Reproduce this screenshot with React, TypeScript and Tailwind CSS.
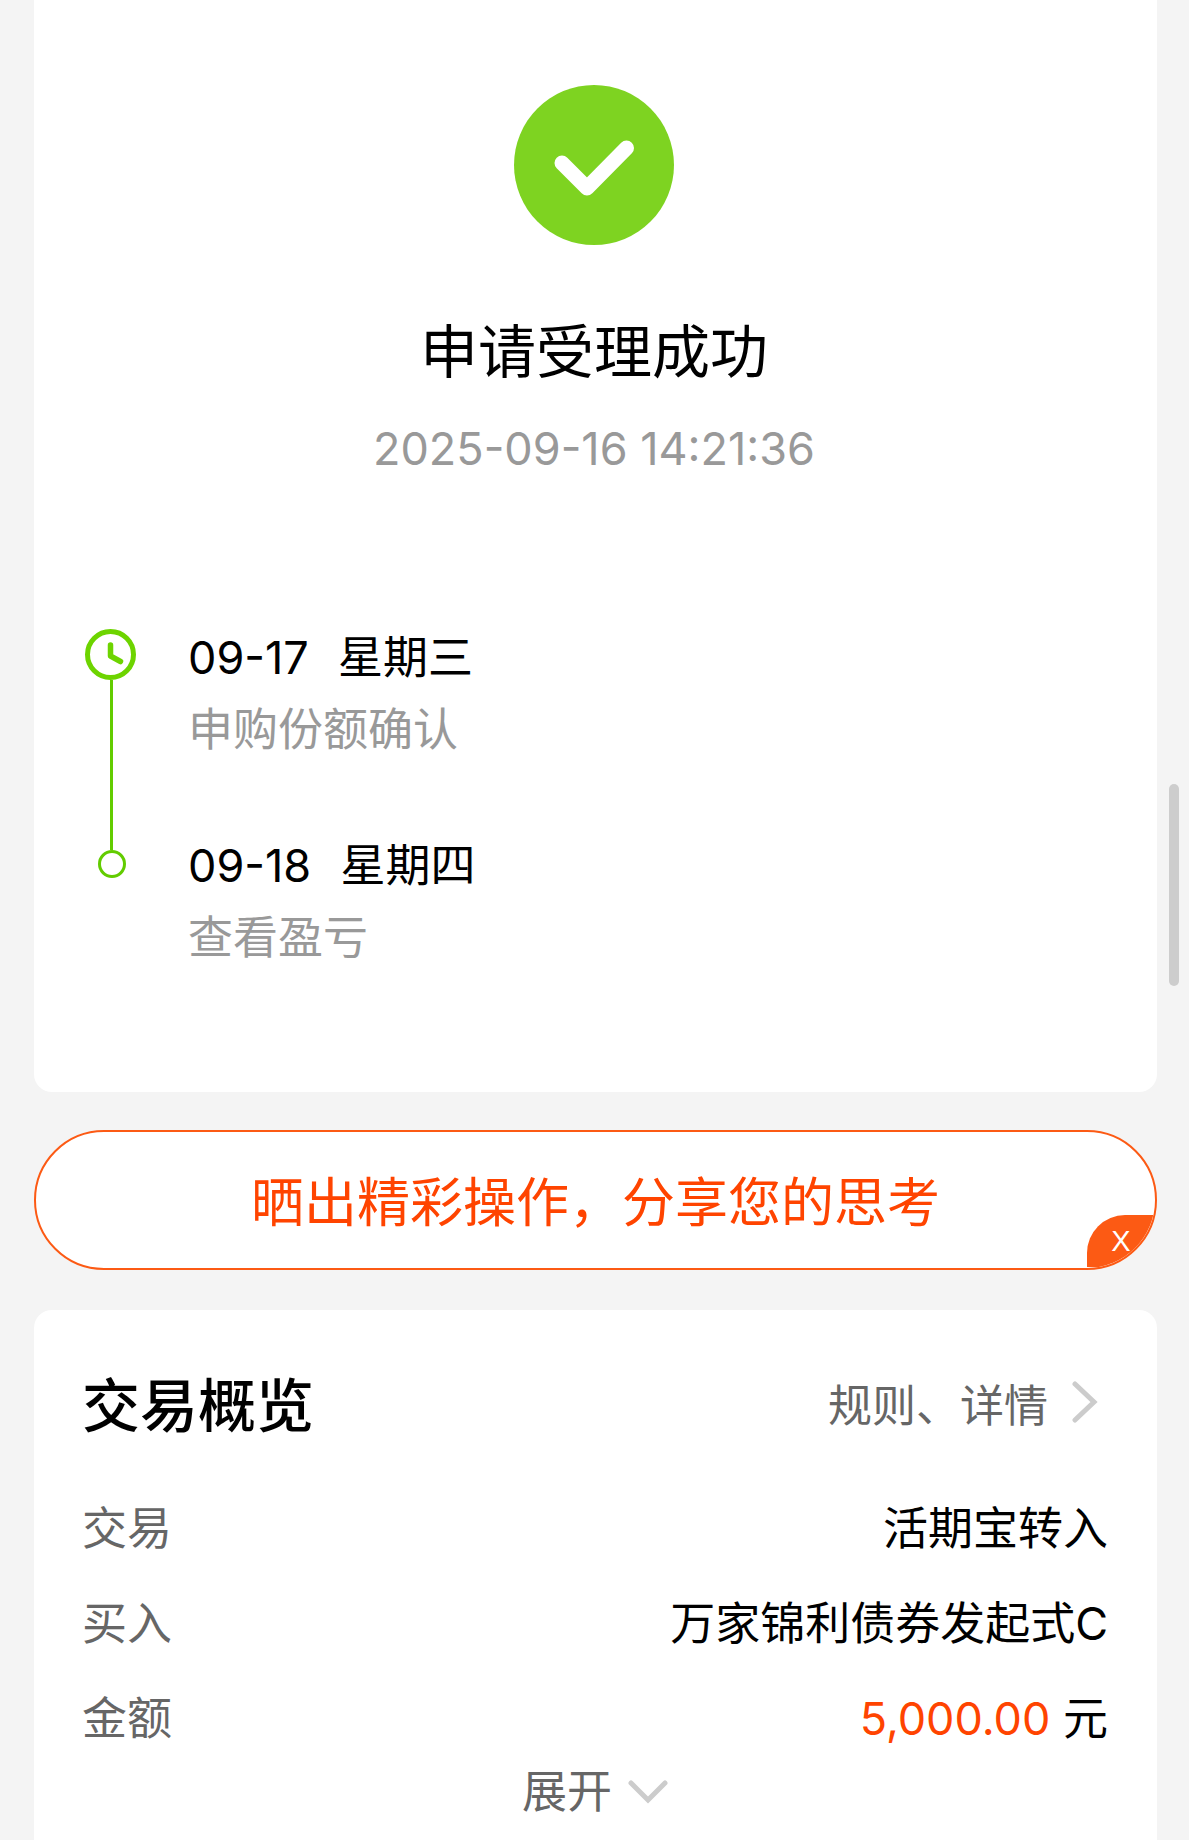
import type React from "react";

const steps = [
  { date: "09-17", weekday: "星期三", label: "申购份额确认" },
  { date: "09-18", weekday: "星期四", label: "查看盈亏" },
];

const SuccessIcon = () => (
  <svg viewBox="0 0 160 160" className="size-40" aria-hidden="true">
    <circle cx="80" cy="80" r="80" fill="#7ed321" />
    <path d="M48 78l25 25 39.500-40" fill="none" stroke="#fff" strokeWidth="15" strokeLinecap="round" strokeLinejoin="round" />
  </svg>
);

const ClockIcon = () => (
  <svg viewBox="0 0 51 51" className="size-[51px] shrink-0 self-start" fill="none" stroke="#6dd400" aria-hidden="true">
    <circle cx="25.500" cy="25.500" r="23" strokeWidth="5" />
    <path d="M25.500 16v11l10 5.500" strokeWidth="5.500" strokeLinecap="round" strokeLinejoin="round" />
  </svg>
);

const Row = ({ label, children }: { label: string; children: React.ReactNode }) => (
  <div className="flex items-center justify-between">
    <dt className="text-[#666]">{label}</dt>
    <dd className="whitespace-pre text-black">{children}</dd>
  </div>
);

const App = () => {
  return (
    <main className="flex min-h-screen flex-col bg-[#f4f4f4] pl-[34px] pr-8 font-['Inter','Noto_Sans_CJK_SC',sans-serif] text-[45px] leading-[72px]">
      <section className="rounded-b-[18px] bg-white pb-[118px] pl-[51px] pr-[54px] pt-[85px]">
        <div className="flex flex-col items-center">
          <SuccessIcon />
          <h1 className="mt-[67px] text-[58px] leading-[80px] text-black">申请受理成功</h1>
          <time className="mt-[27px] leading-[60px] text-[#999]">2025-09-16 14:21:36</time>
        </div>

        <ol className="mt-[143px]">
          {steps.map((step, i) => (
            <li key={step.date} className="flex gap-[50px]">
              <div className="flex w-[53px] flex-col items-center">
                {i === 0 ? (
                  <>
                    <div className="h-[7px]" />
                    <ClockIcon />
                    <div className="w-[3px] flex-1 bg-[#62cc00]" />
                  </>
                ) : (
                  <>
                    <div className="h-5 w-[3px] bg-[#62cc00]" />
                    <div className="size-7 rounded-full border-3 border-[#62cc00]" />
                  </>
                )}
              </div>
              <div className={i === 0 ? "pb-16" : ""}>
                <p className="whitespace-pre text-black">{step.date}{"  "}<span className="ml-1">{step.weekday}</span></p>
                <p className="text-[#999]">{step.label}</p>
              </div>
            </li>
          ))}
        </ol>
      </section>

      <div className="relative mt-[38px] overflow-hidden rounded-full border-2 border-[#fc5a14] bg-white">
        <button type="button" className="w-full pb-[29px] pt-[35px] text-center text-[53px] text-[#ff4400]">晒出精彩操作，分享您的思考</button>
        <button type="button" className="absolute bottom-px right-0 flex h-[52px] w-[68px] items-center justify-center rounded-tl-[38px] bg-[#fc5a14] font-['Liberation_Sans',sans-serif] text-[29px] leading-none text-white">X</button>
      </div>

      <section className="mt-10 flex-1 rounded-t-[18px] bg-white pb-2 pl-12 pr-[49px] pt-14">
        <div className="flex items-center justify-between">
          <h2 className="text-[58px] leading-[80px] font-medium text-black">交易概览</h2>
          <a href="#" className="flex items-center gap-6 pr-2.5 text-[44px] text-[#666]">
            规则、详情
            <svg viewBox="0 0 26 42" className="mb-2 h-[42px] w-[26px]" fill="none" stroke="#ccc" strokeWidth="5" strokeLinecap="round" aria-hidden="true">
              <path d="M3 3l19 18L3 39" />
            </svg>
          </a>
        </div>

        <dl className="mt-[47px] flex flex-col gap-[23px]">
          <Row label="交易">活期宝转入</Row>
          <Row label="买入">万家锦利债券发起式C</Row>
          <Row label="金额"><span className="text-[#ff4400]">5,000.00</span> 元</Row>
        </dl>

        <button type="button" className="mx-auto mt-px flex items-center gap-4 text-[#666]">
          展开
          <svg viewBox="0 0 40 24" className="h-6 w-10" fill="none" stroke="#ccc" strokeWidth="5" strokeLinecap="round" aria-hidden="true">
            <path d="M3 3l17 17L37 3" />
          </svg>
        </button>
      </section>

      {/* scroll thumb */}
      <div className="fixed right-2.5 top-[784px] h-[202px] w-2.5 rounded-full bg-[#cdcdcd]" />
    </main>
  );
};

export default App;
